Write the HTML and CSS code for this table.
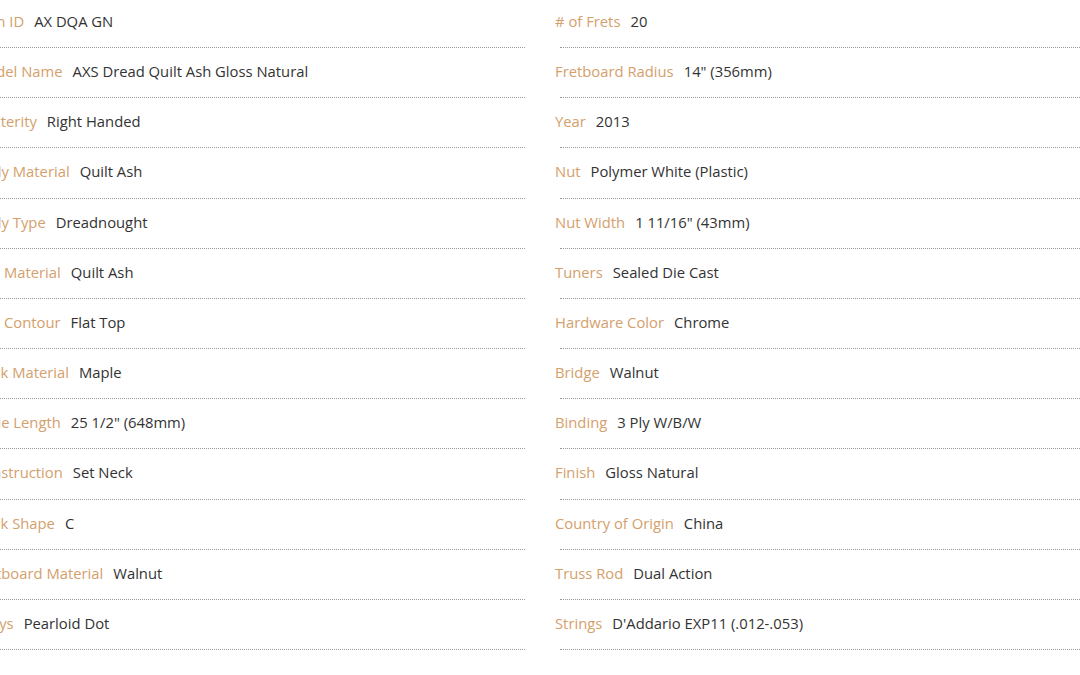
FILE: index.html
```html
<!DOCTYPE html>
<html lang="en">
<head>
<meta charset="utf-8">
<title>Specs</title>
<link rel="stylesheet" href="styles.css">
</head>
<body>
<div class="specs">
  <ul class="col">
    <li class="row"><span class="lbl">Item ID</span><span class="val">AX DQA GN</span></li>
    <li class="row"><span class="lbl">Model Name</span><span class="val">AXS Dread Quilt Ash Gloss Natural</span></li>
    <li class="row"><span class="lbl">Dexterity</span><span class="val">Right Handed</span></li>
    <li class="row"><span class="lbl">Body Material</span><span class="val">Quilt Ash</span></li>
    <li class="row"><span class="lbl">Body Type</span><span class="val">Dreadnought</span></li>
    <li class="row"><span class="lbl">Top Material</span><span class="val">Quilt Ash</span></li>
    <li class="row"><span class="lbl">Top Contour</span><span class="val">Flat Top</span></li>
    <li class="row"><span class="lbl">Neck Material</span><span class="val">Maple</span></li>
    <li class="row"><span class="lbl">Scale Length</span><span class="val">25 1/2" (648mm)</span></li>
    <li class="row"><span class="lbl">Construction</span><span class="val">Set Neck</span></li>
    <li class="row"><span class="lbl">Neck Shape</span><span class="val">C</span></li>
    <li class="row"><span class="lbl">Fretboard Material</span><span class="val">Walnut</span></li>
    <li class="row"><span class="lbl">Inlays</span><span class="val">Pearloid Dot</span></li>
  </ul>
  <ul class="col">
    <li class="row"><span class="lbl"># of Frets</span><span class="val">20</span></li>
    <li class="row"><span class="lbl">Fretboard Radius</span><span class="val">14" (356mm)</span></li>
    <li class="row"><span class="lbl">Year</span><span class="val">2013</span></li>
    <li class="row"><span class="lbl">Nut</span><span class="val">Polymer White (Plastic)</span></li>
    <li class="row"><span class="lbl">Nut Width</span><span class="val">1 11/16" (43mm)</span></li>
    <li class="row"><span class="lbl">Tuners</span><span class="val">Sealed Die Cast</span></li>
    <li class="row"><span class="lbl">Hardware Color</span><span class="val">Chrome</span></li>
    <li class="row"><span class="lbl">Bridge</span><span class="val">Walnut</span></li>
    <li class="row"><span class="lbl">Binding</span><span class="val">3 Ply W/B/W</span></li>
    <li class="row"><span class="lbl">Finish</span><span class="val">Gloss Natural</span></li>
    <li class="row"><span class="lbl">Country of Origin</span><span class="val">China</span></li>
    <li class="row"><span class="lbl">Truss Rod</span><span class="val">Dual Action</span></li>
    <li class="row"><span class="lbl">Strings</span><span class="val">D'Addario EXP11 (.012-.053)</span></li>
  </ul>
</div>
</body>
</html>
```

FILE: styles.css
```css
html, body {
  margin: 0;
  padding: 0;
  background: #ffffff;
  overflow: hidden;
}
body {
  width: 1080px;
  height: 675px;
  font-family: "Open Sans", "Noto Sans", sans-serif;
  font-size: 14.8px;
}
.specs {
  display: grid;
  grid-template-columns: 551px 551px;
  column-gap: 30px;
  margin: -2px 0 0 -26px;
  width: 1132px;
}
.col {
  list-style: none;
  margin: 0;
  padding: 0;
}
.row {
  box-sizing: border-box;
  height: 50.17px;
  margin-left: 5px;
  padding-top: 13px;
  border-bottom: 1px dotted #9a9a9a;
  line-height: 20px;
  white-space: nowrap;
}
.lbl {
  margin-left: -5px;
  margin-right: 10px;
  color: #d4a06c;
}
.val {
  color: #333333;
}
```
